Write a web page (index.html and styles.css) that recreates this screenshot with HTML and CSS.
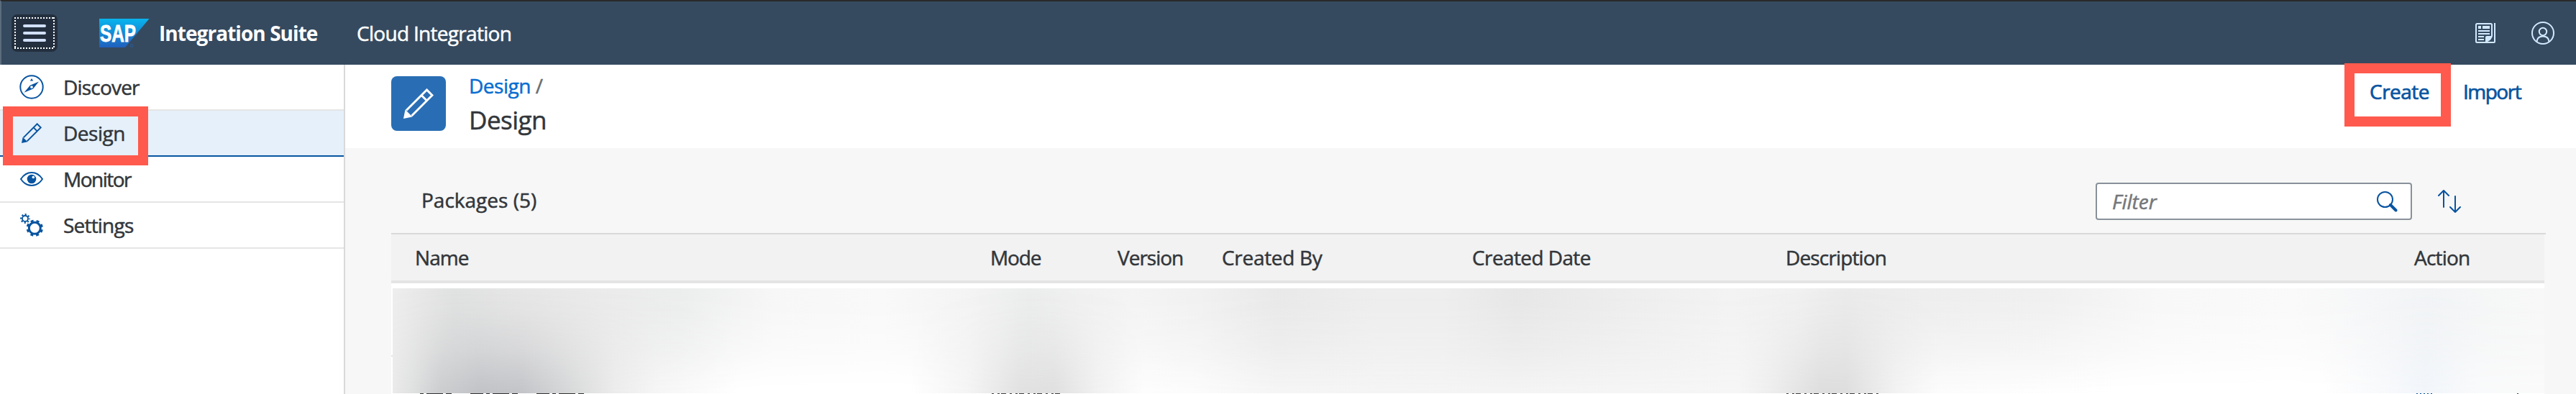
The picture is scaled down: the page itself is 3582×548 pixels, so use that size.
FILE: index.html
```html
<!DOCTYPE html>
<html lang="en">
<head>
<meta charset="utf-8">
<title>SAP Integration Suite</title>
<link rel="stylesheet" href="styles.css">
</head>
<body>
<div class="app">
  <header class="shell">
    <button class="menu" aria-label="Menu"><span class="menu-focus"><i></i><i></i><i></i></span></button>
    <svg class="logo" width="70" height="40" viewBox="0 0 70 40">
      <defs><linearGradient id="lg" x1="0" y1="0" x2="0" y2="1"><stop offset="0" stop-color="#08b4ee"/><stop offset="1" stop-color="#2060bd"/></linearGradient></defs>
      <path d="M0 0H69.5L36 40H0Z" fill="url(#lg)"/>
      <text x="1" y="32" class="logo-text" textLength="50" lengthAdjust="spacingAndGlyphs">SAP</text>
      <circle cx="45" cy="37.5" r="2" fill="none" stroke="#2b5c9c" stroke-width="1"/>
    </svg>
    <span class="brand">Integration Suite</span>
    <span class="product">Cloud Integration</span>
    <span class="shell-actions">
      <svg width="28" height="28" viewBox="0 0 28 28" fill="none" stroke="#d1e8ff" stroke-width="2">
        <path d="M23 18V2.5Q23 1 21.500 1H2.500Q1 1 1 2.500V25.500Q1 27 2.500 27H26Q27 27 27 26V0"/>
        <path d="M4 11H20M4 15H20M4 19H12M4 23H12"/>
        <path d="M4 4H8V8H4ZM10 4H20V8H10ZM14 26V20Q14 18 16 18H24Q23 23 17 26Z" fill="#d1e8ff" stroke="none"/>
      </svg>
      <svg width="32" height="32" viewBox="0 0 32 32" fill="none" stroke="#d1e8ff" stroke-width="2">
        <circle cx="16" cy="16" r="15"/><circle cx="16" cy="14" r="5.200"/>
        <path d="M7.500 28Q8 20.500 16 20.500Q24 20.500 24.500 28"/>
      </svg>
    </span>
  </header>
  <div class="body">
    <nav class="side">
      <a class="item">
        <span class="ico"><svg width="34" height="34" viewBox="0 0 34 34"><circle cx="17" cy="17" r="15.700" fill="none" stroke="#0854a0" stroke-width="2"/><path fill="#0854a0" fill-rule="evenodd" d="M27 9.500L19 19.500L6.500 24.800L14.800 14.800ZM17 15.200A1.900 1.900 0 1 0 17 19A1.900 1.900 0 1 0 17 15.200ZM17 5L19.200 8.500H14.800Z"/></svg></span>
        <span class="t-discover">Discover</span></a>
      <a class="item active">
        <span class="ico"><svg width="28" height="28" viewBox="0 0 42 42"><path d="M4 30.500L32.500 2L40 9.500L11.500 38M25 9.500L32.500 17" fill="none" stroke="#0854a0" stroke-width="3"/><path d="M0 42L2.500 29.500L12.500 39.500Z" fill="#0854a0"/></svg></span>
        <span class="t-design">Design</span></a>
      <a class="item">
        <span class="ico"><svg width="32" height="22" viewBox="0 0 32 22"><path d="M1 11Q7 2 16 2Q25 2 31 11Q25 20 16 20Q7 20 1 11Z" fill="none" stroke="#0854a0" stroke-width="2"/><circle cx="16" cy="11" r="6.300" fill="#0854a0"/><circle cx="18.300" cy="8.500" r="1.800" fill="#fff"/></svg></span>
        <span class="t-monitor">Monitor</span></a>
      <a class="item">
        <span class="ico"><svg width="32" height="34" viewBox="0 0 32 34" fill="none" stroke="#0854a0"><circle cx="7" cy="8" r="4" stroke-width="1.800"/><circle cx="7" cy="8" r="5.800" stroke-width="2.200" stroke-dasharray="2.100 2.455" stroke-dashoffset="1.050"/><circle cx="20.300" cy="21.300" r="8" stroke-width="3"/><circle cx="20.300" cy="21.300" r="10.200" stroke-width="3" stroke-dasharray="4 4.011" stroke-dashoffset="-2"/></svg></span>
        <span class="t-settings">Settings</span></a>
      <span class="mark mark-design"></span>
    </nav>
    <main class="main">
      <section class="page-head">
        <span class="page-icon"><svg width="42" height="42" viewBox="0 0 42 42"><path d="M4 30.500L32.500 2L40 9.500L11.500 38M25 9.500L32.500 17" fill="none" stroke="#fff" stroke-width="3"/><path d="M0 42L2.500 29.500L12.500 39.500Z" fill="#fff"/></svg></span>
        <div class="titles">
          <div class="crumb"><a>Design</a><span>/</span></div>
          <h1>Design</h1>
        </div>
        <div class="page-actions"><a class="create">Create<span class="mark mark-create"></span></a><a class="import">Import</a></div>
      </section>
      <section class="toolbar">
        <span class="count">Packages (5)</span>
        <div class="filter"><span>Filter</span>
          <svg width="29" height="29" viewBox="0 0 29 29" fill="none" stroke="#0854a0"><circle cx="11.500" cy="11.500" r="10.500" stroke-width="2"/><path d="M19 19L26.500 26.500" stroke-width="4" stroke-linecap="round"/></svg>
        </div>
        <svg class="sort" width="32" height="32" viewBox="0 0 32 32" fill="none" stroke="#0854a0" stroke-width="2" stroke-linecap="round" stroke-linejoin="round"><path d="M8 24V1M1 8L8 1L15 8M24 9V31M17 24L24 31L31 24"/></svg>
      </section>
      <section class="table">
        <div class="thead">
          <span class="c-name">Name</span><span class="c-mode">Mode</span><span class="c-version">Version</span><span class="c-by">Created By</span><span class="c-date">Created Date</span><span class="c-desc">Description</span><span class="c-action">Action</span>
        </div>
        <div class="rows">
          <div class="blurred"></div>
          <div class="next-row"><i></i><i></i><i></i><i class="blue"></i><i></i></div>
        </div>
      </section>
    </main>
  </div>
</div>
</body>
</html>
```
FILE: styles.css
```css
* { box-sizing: border-box; }
body { margin: 0; background: #f7f7f7; }
.app {
  height: 548px;
  overflow: hidden;
  display: flex;
  flex-direction: column;
  font: 28px/38px "Open Sans", "Noto Sans", sans-serif;
  color: #32363a;
  -webkit-text-stroke: .5px currentColor;
  white-space: nowrap;
}
svg { display: block; flex: none; }

/* Shell bar */
.shell {
  flex: none;
  height: 90px;
  display: flex;
  align-items: center;
  background: #354a5f;
  border-top: 2px solid #2a2a2a;
  border-left: 2px solid #5b6c7d;
  padding: 0 30px 0 14px;
  color: #fff;
}
.menu {
  width: 64px;
  height: 52px;
  margin: 0 58px 0 0;
  padding: 4px;
  border: 0;
  border-radius: 8px;
  background: #232f3e;
}
.menu-focus {
  height: 44px;
  display: flex;
  flex-direction: column;
  align-items: center;
  justify-content: center;
  gap: 6px;
  background:
    repeating-linear-gradient(90deg, #fff 0 2px, transparent 2px 4px) 0 0 / 100% 2px no-repeat,
    repeating-linear-gradient(90deg, #fff 0 2px, transparent 2px 4px) 0 100% / 100% 2px no-repeat,
    repeating-linear-gradient(180deg, #fff 0 2px, transparent 2px 4px) 0 0 / 2px 100% no-repeat,
    repeating-linear-gradient(180deg, #fff 0 2px, transparent 2px 4px) 100% 0 / 2px 100% no-repeat;
}
.menu-focus i { width: 32px; height: 4px; border-radius: 2px; background: #d1e0ff; }
.logo-text { font: bold 34px "Liberation Sans", Arial, sans-serif; fill: #fff; stroke: #fff; stroke-width: .8px; }
.brand { margin-left: 13px; width: 275px; font-weight: 700; letter-spacing: -.95px; -webkit-text-stroke: 0; }
.product { letter-spacing: -.7px; }
.shell-actions { margin-left: auto; display: flex; align-items: center; gap: 50px; }

.body { flex: 1; display: flex; min-height: 0; }

/* Side navigation */
.side { position: relative; flex: none; width: 480px; background: #fff; border-right: 2px solid #d9d9d9; }
.item { display: flex; align-items: center; height: 64px; border-bottom: 2px solid #e5e5e5; }
.item.active { background: #e5f0fa; border-bottom-color: #0854a0; }
.ico { width: 88px; display: flex; justify-content: center; }
.t-discover, .t-settings { letter-spacing: -.8px; }
.t-design { letter-spacing: -.5px; }
.t-monitor { letter-spacing: -1.5px; }

/* Callout frames */
.mark { position: absolute; border: 14px solid #ff5a4d; }
.mark-design { left: 4px; top: 58px; width: 202px; height: 82px; }
.mark-create { left: -35px; top: -20px; width: 148px; height: 88px; }

.main { flex: 1; min-width: 0; display: flex; flex-direction: column; }
.page-head { flex: none; height: 116px; background: #fff; display: flex; align-items: flex-start; padding: 16px 76px 0 64px; }
.page-icon { width: 76px; height: 76px; border-radius: 8px; background: #296eb5; display: flex; align-items: center; justify-content: center; }
.titles { margin: -6px 0 0 32px; }
.crumb { display: flex; gap: 7px; color: #6a6d70; }
.crumb a { color: #0a6ed1; letter-spacing: -.5px; }
h1 { margin: 4px 0 0; font-size: 35px; line-height: 50px; font-weight: 400; letter-spacing: -.5px; }
.page-actions { margin: 2px 0 0 auto; display: flex; color: #0854a0; -webkit-text-stroke: .7px #0854a0; }
.create { position: relative; width: 130px; letter-spacing: -.5px; }
.import { width: 81px; letter-spacing: -1.5px; }

.toolbar { flex: none; height: 118px; display: flex; align-items: flex-start; padding: 48px 160px 0 104px; }
.count { margin-top: 5px; padding-left: 2px; }
.filter { margin-left: auto; width: 440px; height: 52px; display: flex; align-items: center; justify-content: space-between; padding: 0 18px 0 21px; background: #fff; border: 2px solid #89919a; border-radius: 4px; font-style: italic; color: #74777a; }
.sort { margin: 10px 0 0 36px; }

/* Package table */
.table { flex: 1; display: flex; flex-direction: column; margin: 0 42px 0 64px; border-top: 2px solid #d9d9d9; }
.thead {
  flex: none;
  height: 68px;
  margin-right: 2px;
  padding-left: 33px;
  display: grid;
  grid-template-columns: 800px 177px 145px 348px 436px 874px 1fr;
  align-items: center;
  background: #f2f2f2;
  border-bottom: 4px solid #e4e4e4;
}
.c-name { letter-spacing: -.95px; }
.c-mode { letter-spacing: -1.1px; }
.c-version { letter-spacing: -1px; }
.c-by { letter-spacing: -.3px; }
.c-date { letter-spacing: -.6px; }
.c-desc { letter-spacing: -.85px; }
.c-action { letter-spacing: -.8px; }
.rows {
  flex: 1;
  margin-right: 2px;
  padding: 7px 0 0 2px;
  background: linear-gradient(#e5e5e5, #e5e5e5) 0 100px / 2px 2px no-repeat, #fff;
}
.blurred {
  position: relative;
  height: 146px;
  background: linear-gradient(90deg,
    #eeeeee 0, #e8e8e8 40px, #e1e2e2 85px, #e7e7e7 180px, #ebebeb 290px, #eceded 400px, #f7f7f7 530px, #f9f9f9 680px,
    #f4f4f4 800px, #eceded 885px, #f1f1f1 960px, #f4f4f4 1030px, #f1f1f1 1120px, #e9e9e9 1230px, #eeeeee 1370px, #eeeeee 1460px,
    #e7e7e7 1560px, #eeeeee 1720px, #f3f3f3 1860px, #f1f1f1 1950px, #ebebeb 2020px, #eeeeee 2130px, #f0f0f0 2300px,
    #f8f8f8 2460px, #fafafa 2640px, #f6f7f8 2740px, #f2f4f6 2830px, #f6f7f7 2930px, #f8f8f8 100%);
}
.blurred::after {
  content: "";
  position: absolute;
  inset: 0;
  background: linear-gradient(90deg,
    #eaeaea 0, #e0e1e1 25px, #cccdcf 65px, #c0c2c6 120px, #c3c4c8 180px, #d5d6d7 240px, #ececec 310px, #f6f6f6 370px, #ffffff 480px,
    #ffffff 720px, #f4f4f4 800px, #e1e1e1 870px, #dfdfdf 920px, #f1f1f1 980px, #fdfdfd 1045px, #fcfcfc 1110px, #f5f5f5 1230px,
    #f4f4f4 1560px, #f6f6f6 1870px, #efefef 1910px, #dddddd 1985px, #dcdddc 2020px, #f2f2f2 2090px, #fcfcfc 2150px, #ffffff 2400px,
    #ffffff 2680px, #f9fafc 2760px, #f1f5fa 2825px, #f9fafb 2900px, #fafafa 100%);
  -webkit-mask-image: linear-gradient(transparent 0, rgba(0,0,0,.1) 22%, rgba(0,0,0,.42) 58%, rgba(0,0,0,.8) 85%, #000 100%);
  mask-image: linear-gradient(transparent 0, rgba(0,0,0,.1) 22%, rgba(0,0,0,.42) 58%, rgba(0,0,0,.8) 85%, #000 100%);
}
/* Sliver of the following row at the bottom edge */
.next-row { display: grid; grid-template-columns: 795px 1105px 876px 140px 40px; padding-left: 38px; height: 1px; }
.next-row i { height: 1px; width: 133px; background: repeating-linear-gradient(90deg, #444 0 3px, #fff 3px 8px, #444 8px 11px, #fff 11px 13px, #444 13px 20px, #fff 20px 25px); }
.next-row i:first-child { width: 228px; background: repeating-linear-gradient(90deg, #333 0 5px, #fff 5px 9px, #333 9px 32px, #fff 32px 36px, #333 36px 44px, #fff 44px 70px, #333 70px 88px, #fff 88px 92px); }
.next-row i:nth-child(2) { width: 97px; }
.next-row i.blue { width: 22px; background: repeating-linear-gradient(90deg, #0854a0 0 2px, #fff 2px 5px); }
.next-row i:last-child { width: 2px; }
```
